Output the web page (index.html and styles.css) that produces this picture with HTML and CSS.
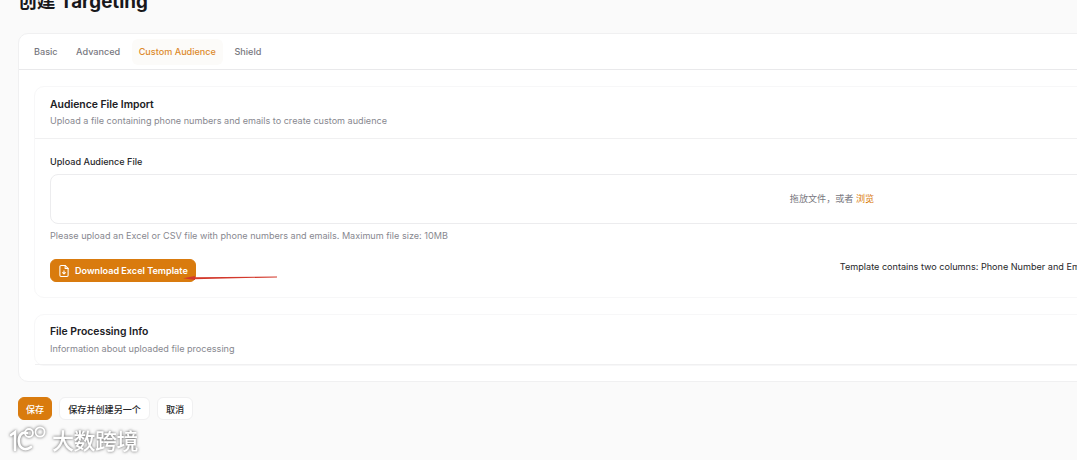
FILE: index.html
```html
<!DOCTYPE html>
<html lang="en">

<head>
    <meta charset="UTF-8">
    <meta name="viewport" content="width=device-width, initial-scale=1.0">
    <title>创建 Targeting</title>
    <link rel="stylesheet" href="styles.css">
</head>

<body>
    <main class="page">
        <h1 class="page-title">创建 Targeting</h1>

        <div class="card">
            <nav class="tabs">
                <span class="tab">Basic</span>
                <span class="tab">Advanced</span>
                <span class="tab active">Custom Audience</span>
                <span class="tab">Shield</span>
            </nav>

            <div class="card-body">
                <section class="panel">
                    <header class="panel-head">
                        <h2>Audience File Import</h2>
                        <p>Upload a file containing phone numbers and emails to create custom audience</p>
                    </header>
                    <div class="panel-content">
                        <div class="field-label">Upload Audience File</div>
                        <div class="dropzone">拖放文件，或者 <span class="browse">浏览</span></div>
                        <p class="hint">Please upload an Excel or CSV file with phone numbers and emails. Maximum file size: 10MB</p>
                        <div class="template-row">
                            <button class="btn primary download">
                                <svg class="file-icon" viewBox="0 0 16 16" width="14" height="14" fill="none" stroke="#fff" stroke-width="1.2" stroke-linejoin="round" stroke-linecap="round">
                                    <path d="M9.5 1.8H4.6a1.3 1.3 0 0 0-1.3 1.3v9.8a1.3 1.3 0 0 0 1.3 1.3h6.8a1.3 1.3 0 0 0 1.3-1.3V5z"/>
                                    <path d="M9.3 1.8v3.4h3.4"/>
                                    <path d="M8 7.6v3.8M6.4 9.9 8 11.4l1.6-1.5"/>
                                </svg>
                                Download Excel Template
                            </button>
                            <span class="template-note">Template contains two columns: Phone Number and Email</span>
                        </div>
                    </div>
                </section>

                <section class="panel">
                    <header class="panel-head last">
                        <h2>File Processing Info</h2>
                        <p>Information about uploaded file processing</p>
                    </header>
                </section>
            </div>
        </div>

        <div class="actions">
            <button class="btn primary">保存</button>
            <button class="btn">保存并创建另一个</button>
            <button class="btn">取消</button>
        </div>
    </main>

    <!-- red annotation drawn over the screenshot -->
    <svg class="arrow" viewBox="0 0 100 12" width="100" height="12">
        <path d="M14 6.2 97 5.6 97 6.4 14 8.2z" fill="#d3392c"/>
        <path d="M3 7.2 15 5 15 9z" fill="#d3392c"/>
    </svg>

    <div class="watermark">
        <svg viewBox="0 0 38 28" width="38" height="28" fill="none" stroke="#fff" stroke-width="2.6" stroke-linecap="round">
            <path d="M2 10 6 7 6 25"/>
            <path d="M18 8C12 6 9 12 10 18c1 6 7 8 12 4"/>
            <circle cx="20" cy="8" r="4" stroke-width="1.8"/>
            <circle cx="31" cy="7" r="4.6" stroke-width="1.8"/>
        </svg>
        <span>大数跨境</span>
    </div>
</body>

</html>
```

FILE: styles.css
```css
* {
    margin: 0;
    padding: 0;
    box-sizing: border-box;
}
html, body {
    width: 100%;
    height: 100%;
    overflow: hidden;
}
body {
    position: relative;
    background-color: #fafafa;
    color: #18181b;
    font-family: Inter, "Noto Sans CJK SC", sans-serif;
}
.page {
    width: 1646px;
    margin-top: -11px;
    padding-left: 18px;
}
.page-title {
    font-size: 18.8px;
    line-height: 26px;
    font-weight: 700;
    margin-bottom: 18px;
}
.card {
    background-color: #fff;
    border: 1px solid #f0f0f1;
    border-radius: 10px;
}
.tabs {
    display: flex;
    align-items: center;
    gap: 4.5px;
    height: 36px;
    padding-left: 8px;
    border-bottom: 1px solid #e9e9eb;
}
.tab {
    padding: 0 7px;
    font-size: 9.1px;
    line-height: 26px;
    color: #77777e;
    font-weight: 500;
    border-radius: 6px;
}
.tab.active {
    color: #dc8a2c;
    background-color: #fcfbf9;
}
.card-body {
    padding: 16px 15px 15px;
}
.panel {
    border: 1px solid #f7f7f8;
    border-radius: 10px;
    margin-bottom: 16px;
}
.panel:last-child {
    margin-bottom: 0;
}
.panel-head {
    padding: 10px 15px;
    border-bottom: 1px solid #f0f0f1;
}
.panel-head.last {
    padding-top: 9px;
    padding-bottom: 8px;
}
.panel-head.last p {
    margin-top: 1px;
}
.panel-head h2 {
    font-size: 10.4px;
    line-height: 16px;
    font-weight: 600;
    color: #202024;
}
.panel-head p {
    font-size: 9.1px;
    line-height: 15px;
    color: #88888f;
}
.panel-content {
    padding: 16px 15px 15px;
}
.field-label {
    font-size: 9.1px;
    line-height: 14px;
    font-weight: 500;
    color: #27272a;
    margin-bottom: 5px;
}
.dropzone {
    height: 50px;
    line-height: 48px;
    text-align: center;
    border: 1px solid #ececee;
    border-radius: 8px;
    font-size: 9.1px;
    color: #77777e;
}
.browse {
    color: #d97706;
}
.hint {
    margin-top: 5px;
    font-size: 9.1px;
    line-height: 14px;
    color: #88888f;
}
.template-row {
    display: flex;
    align-items: flex-start;
    margin-top: 16px;
}
.template-note {
    margin-left: 644px;
    margin-top: 2px;
    font-size: 9.1px;
    line-height: 11px;
    color: #27272a;
}
.btn {
    display: inline-flex;
    align-items: center;
    height: 23px;
    padding: 0 8px;
    font-family: inherit;
    font-size: 9.1px;
    font-weight: 500;
    color: #27272a;
    background-color: #fff;
    border: 1px solid #f0f0f1;
    border-radius: 6px;
}
.btn.primary {
    padding: 0 7px;
    color: #fff;
    background-color: #d97b0e;
    border-color: #d97b0e;
}
.download {
    gap: 4px;
    font-weight: 600;
}
.btn.download {
    padding: 0 7px 0 6px;
}
.actions {
    display: flex;
    gap: 7px;
    margin-top: 15px;
}
.arrow {
    position: absolute;
    left: 180px;
    top: 271px;
}
.watermark {
    position: absolute;
    left: 9px;
    top: 423px;
    display: flex;
    align-items: center;
    gap: 5px;
    filter: drop-shadow(0 0 1.5px rgba(70, 70, 70, .9));
}
.watermark span {
    color: #fff;
    font-size: 22px;
    font-weight: 500;
    letter-spacing: -.5px;
    font-family: "Noto Sans CJK SC", sans-serif;
}
```
